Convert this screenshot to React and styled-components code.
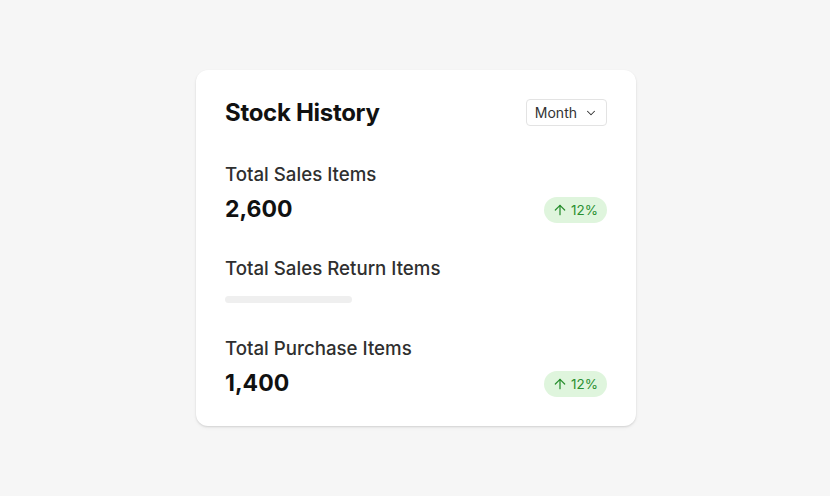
import React from "react";
import styled, { createGlobalStyle } from "styled-components";
import { ArrowUp, ChevronDown } from "lucide-react";

const GlobalStyle = createGlobalStyle`
  html, body {
    margin: 0;
    padding: 0;
    background: #f6f6f6;
    font-family: Inter, "Noto Sans", sans-serif;
  }
`;

const Page = styled.div`
  min-height: 496px;
  display: flex;
  justify-content: center;
  padding: 70px 0 0 2px;
  box-sizing: border-box;
`;

const Card = styled.div`
  width: 440px;
  height: 356px;
  box-sizing: border-box;
  background: #fff;
  border-radius: 12px;
  box-shadow: 0 1px 2px rgba(0, 0, 0, 0.12), 0 2px 4px rgba(0, 0, 0, 0.04);
  padding: 29px;
  display: flex;
  flex-direction: column;
`;

const Header = styled.div`
  display: flex;
  align-items: center;
  justify-content: space-between;
  height: 27px;
  margin-bottom: 36px;
`;

const Title = styled.h2`
  margin: 0;
  font-size: 24px;
  font-weight: 700;
  color: #111;
  letter-spacing: -0.3px;
`;

const Select = styled.button`
  display: flex;
  align-items: center;
  gap: 7px;
  height: 27px;
  padding: 0 8px 0 8px;
  background: #fff;
  border: 1px solid #e3e3e3;
  border-radius: 4px;
  font-family: inherit;
  font-size: 14px;
  font-weight: 400;
  color: #333;
`;

const Section = styled.div`
  display: flex;
  flex-direction: column;
  margin-bottom: ${({ $last }) => ($last ? "0" : "33px")};
`;

const Label = styled.div`
  font-size: 18.7px;
  font-weight: 500;
  color: #2f2f2f;
  line-height: 24px;
  margin-top: 1px;
  margin-bottom: -1px;
`;

const ValueRow = styled.div`
  display: flex;
  align-items: center;
  justify-content: space-between;
  height: 26px;
  margin-top: 11px;
`;

const Value = styled.div`
  font-size: 23px;
  font-weight: 700;
  color: #111;
  margin-top: -2px;
`;

const Badge = styled.span`
  display: inline-flex;
  align-items: center;
  gap: 3px;
  height: 26px;
  padding: 0 9px 0 8px;
  border-radius: 13px;
  background: #dff5dd;
  color: #2a8f30;
  font-size: 13.5px;
  font-weight: 400;
`;

const Skeleton = styled.div`
  width: 127px;
  height: 7px;
  border-radius: 4px;
  background: #efefef;
  margin-top: 16px;
`;

const stats = [
  { label: "Total Sales Items", value: "2,600", change: "12%" },
  { label: "Total Sales Return Items", loading: true },
  { label: "Total Purchase Items", value: "1,400", change: "12%" },
];

export default function App() {
  return (
    <>
      <GlobalStyle />
      <Page>
        <Card>
          <Header>
            <Title>Stock History</Title>
            <Select>
              Month
              <ChevronDown size={14} strokeWidth={1.8} />
            </Select>
          </Header>
          {stats.map((s, i) => (
            <Section key={s.label} $last={i === stats.length - 1}>
              <Label>{s.label}</Label>
              {s.loading ? (
                <Skeleton />
              ) : (
                <ValueRow>
                  <Value>{s.value}</Value>
                  <Badge>
                    <ArrowUp size={16} strokeWidth={1.9} />
                    {s.change}
                  </Badge>
                </ValueRow>
              )}
            </Section>
          ))}
        </Card>
      </Page>
    </>
  );
}
